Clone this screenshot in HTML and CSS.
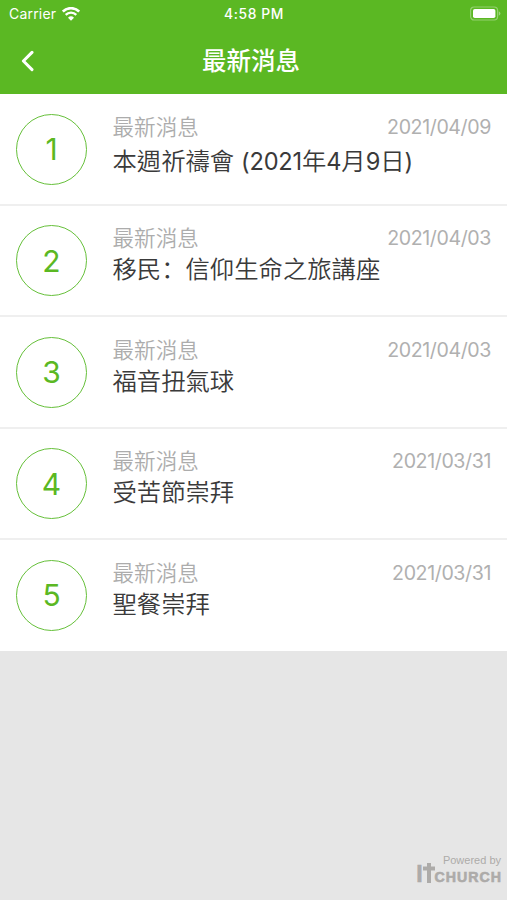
FILE: index.html
```html
<!DOCTYPE html>
<html lang="zh-Hant">
<head>
    <meta charset="UTF-8">
    <meta name="viewport" content="width=device-width, initial-scale=1.0">
    <title>最新消息</title>
    <link rel="stylesheet" href="styles.css">
</head>
<body>
    <header class="header">
        <div class="status">
            <div class="carrier">
                <span>Carrier</span>
                <svg class="wifi" viewBox="0 0 18 14" width="18" height="14">
                    <path d="M0.8 4.6 A11.5 11.5 0 0 1 17.2 4.6" fill="none" stroke="#fff" stroke-width="2.6"/>
                    <path d="M3.7 7.9 A7.4 7.4 0 0 1 14.3 7.9" fill="none" stroke="#fff" stroke-width="2.3"/>
                    <path d="M9 13.8 L6 10.7 A4.3 4.3 0 0 1 12 10.7 Z" fill="#fff"/>
                </svg>
            </div>
            <span class="time">4:58 PM</span>
            <svg class="battery" viewBox="0 0 32 15" width="32" height="15">
                <rect x="1.6" y="1" width="27" height="13" rx="3.5" fill="none" stroke="#fff" stroke-opacity=".35" stroke-width="1.2"/>
                <rect x="4" y="3" width="22.4" height="9" rx="1.8" fill="#fff"/>
                <path d="M29.8 5.2 Q31.4 6 31.4 7.5 Q31.4 9 29.8 9.8 Z" fill="#fff" fill-opacity=".4"/>
            </svg>
        </div>
        <nav class="navbar">
            <svg class="back" viewBox="0 0 14 22" width="14" height="22">
                <path d="M12 2.4 L3.4 11 L12 19.6" fill="none" stroke="#fff" stroke-width="3" stroke-linecap="round" stroke-linejoin="round"/>
            </svg>
            <h1>最新消息</h1>
        </nav>
    </header>

    <!-- News list -->
    <ul class="list">
        <li class="item">
            <div class="number">1</div>
            <div class="content">
                <div class="meta"><span class="category">最新消息</span><span class="date">2021/04/09</span></div>
                <div class="title mixed">本週祈禱會 <span class="latin">(2021</span>年<span class="latin">4</span>月<span class="latin">9</span>日<span class="latin">)</span></div>
            </div>
        </li>
        <li class="item">
            <div class="number">2</div>
            <div class="content">
                <div class="meta"><span class="category">最新消息</span><span class="date">2021/04/03</span></div>
                <div class="title">移民<span class="colon" lang="zh-Hans">：</span>信仰生命之旅講座</div>
            </div>
        </li>
        <li class="item">
            <div class="number">3</div>
            <div class="content">
                <div class="meta"><span class="category">最新消息</span><span class="date">2021/04/03</span></div>
                <div class="title">福音扭氣球</div>
            </div>
        </li>
        <li class="item">
            <div class="number">4</div>
            <div class="content">
                <div class="meta"><span class="category">最新消息</span><span class="date">2021/03/31</span></div>
                <div class="title">受苦節崇拜</div>
            </div>
        </li>
        <li class="item">
            <div class="number">5</div>
            <div class="content">
                <div class="meta"><span class="category">最新消息</span><span class="date">2021/03/31</span></div>
                <div class="title">聖餐崇拜</div>
            </div>
        </li>
    </ul>

    <footer class="footer">
        <span class="powered">Powered by</span>
        <div class="logo">
            <span class="logo-i">I</span>
            <svg class="cross" viewBox="0 0 12 20" width="12" height="20">
                <path d="M4 0 H8 V3.6 H12 V7.4 H8 V20 H4 V7.4 H0 V3.6 H4 Z" fill="#adaba9"/>
            </svg>
            <span class="logo-text">CHURCH</span>
        </div>
    </footer>
</body>
</html>
```

FILE: styles.css
```css
* {
    box-sizing: border-box;
}
body {
    margin: 0;
    height: 900px;
    display: flex;
    flex-direction: column;
    background-color: #e6e6e6;
    font-family: Inter, "Noto Sans CJK TC", sans-serif;
}
.header {
    height: 94px;
    background-color: #5bb823;
    color: white;
}
.status {
    display: grid;
    grid-template-columns: 1fr auto 1fr;
    align-items: center;
    height: 27px;
    padding: 0 6px 0 9px;
    font-size: 14px;
}
.carrier {
    display: flex;
    align-items: center;
    gap: 6px;
    letter-spacing: 0.2px;
}
.time {
    margin-right: 2px;
    font-weight: 550;
    font-size: 13.8px;
    letter-spacing: 0.6px;
}
.battery {
    justify-self: end;
}
.navbar {
    display: grid;
    grid-template-columns: 40px 1fr 40px;
    align-items: center;
    height: 67px;
    padding: 0 20px;
}
h1 {
    margin: 0;
    font-size: 24.5px;
    line-height: 36px;
    font-weight: 500;
    text-align: center;
    padding-right: 5px;
}
.list {
    margin: 0;
    padding: 0;
    list-style: none;
}
.item {
    display: flex;
    height: 111.5px;
    padding: 19.5px 16px 0;
    background-color: white;
    border-bottom: 2px solid #efefef;
}
.item:last-child {
    height: 111px;
    border-bottom: none;
}
.number {
    flex: none;
    display: flex;
    align-items: center;
    justify-content: center;
    width: 71px;
    height: 71px;
    margin-right: 25.5px;
    border: 1.5px solid #66c03a;
    border-radius: 50%;
    color: #5bb823;
    font-size: 30px;
}
.content {
    flex: 1;
}
.meta {
    display: flex;
    justify-content: space-between;
    height: 27px;
    line-height: 27px;
    color: #b0b0b0;
}
.category {
    color: #acacac;
    font-size: 21.6px;
    font-weight: 350;
}
.date {
    font-size: 19.6px;
    letter-spacing: -0.4px;
}
.title {
    height: 36px;
    line-height: 35px;
    color: #3a3a3a;
    font-size: 24.35px;
    font-weight: 350;
    white-space: nowrap;
}
.mixed {
    padding-top: 3px;
}
.latin {
    font-size: 23.6px;
    font-weight: 370;
    letter-spacing: -0.2px;
}
.colon {
    font-family: "Noto Sans CJK SC", sans-serif;
    line-height: 1;
}
.footer {
    display: flex;
    flex-direction: column;
    align-items: flex-end;
    margin-top: auto;
    padding: 0 6px 17px;
    color: #adaba9;
    font-family: "Liberation Sans", Arial, sans-serif;
}
.powered {
    font-size: 11px;
    line-height: 12px;
    margin-bottom: -3px;
}
.logo {
    display: flex;
    align-items: flex-end;
    height: 20px;
    font-weight: bold;
}
.logo-i {
    font-size: 23px;
    line-height: 17px;
    -webkit-text-stroke: 0.6px #adaba9;
}
.logo-text {
    font-size: 14.2px;
    line-height: 12px;
    letter-spacing: 1px;
    margin-right: -1px;
    -webkit-text-stroke: 0.6px #adaba9;
}
```
